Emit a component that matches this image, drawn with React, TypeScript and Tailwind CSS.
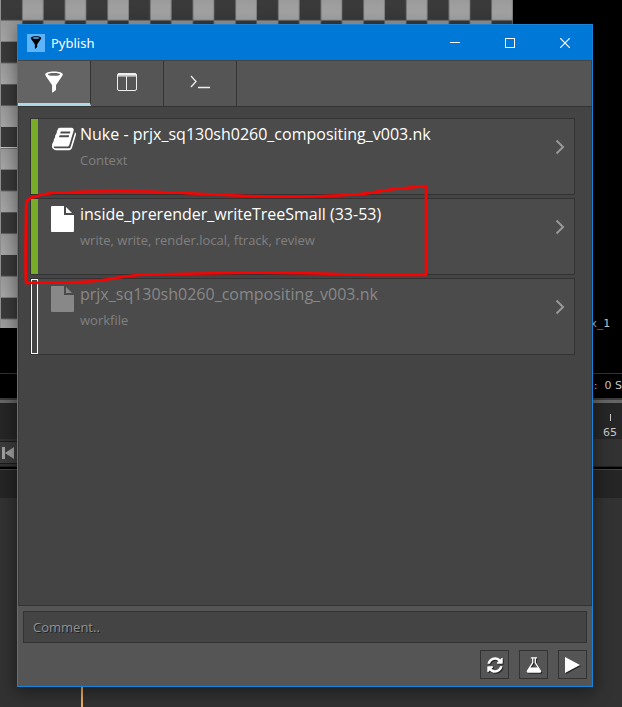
import React from "react";

const BOOK =
  "M1703 478q40 57 18 129l-275 906q-19 64-76.5 107.5t-122.5 43.5h-923q-77 0-148.5-53.5t-99.5-131.5q-24-67-2-127 0-4 3-27t4-37q1-8-3-21.5t-3-19.5q2-11 8-21t16.5-23.5 16.5-23.5q23-38 45-91.5t30-91.5q3-10 .5-30t-.5-28q3-11 17-28t17-23q21-36 42-92t25-90q1-9-2.500-32t.5-28q4-13 22-30.5t22-22.500q19-26 42.500-84.500t27.500-96.500q1-8-3-25.500t-2-26.500q2-8 9-18t18-23 17-21q8-12 16.500-30.500t15-35 16-36 19.500-32 26.500-23.500 36-11.500 47.500 5.500l-1 3q38-9 51-9h761q74 0 114 56t18 130l-274 906q-36 119-71.500 153.500t-128.500 34.500h-869q-27 0-38 15-11 16-1 43 24 70 144 70h923q29 0 56-15.500t35-41.500l300-987q7-22 5-57 38 15 59 43zm-1064 2q-4 13 2 22.500t20 9.500h608q13 0 25.500-9.500t16.500-22.500l21-64q4-13-2-22.500t-20-9.500h-608q-13 0-25.500 9.500t-16.500 22.500zm-83 256q-4 13 2 22.500t20 9.500h608q13 0 25.500-9.500t16.500-22.500l21-64q4-13-2-22.500t-20-9.500h-608q-13 0-25.500 9.500t-16.500 22.500z";
const REFRESH =
  "M1639 1056q0 5-1 7-64 268-268 434.5t-478 166.5q-146 0-282.5-55t-243.5-157l-129 129q-19 19-45 19t-45-19-19-45v-448q0-26 19-45t45-19h448q26 0 45 19t19 45-19 45l-137 137q71 66 161 102t187 36q134 0 250-65t186-179q11-17 53-117 8-23 30-23h192q13 0 22.5 9.5t9.5 22.5zm25-800v448q0 26-19 45t-45 19h-448q-26 0-45-19t-19-45 19-45l138-138q-148-137-349-137-134 0-250 65t-186 179q-11 17-53 117-8 23-30 23h-199q-13 0-22.5-9.5t-9.5-22.5v-7q65-268 270-434.5t480-166.5q146 0 284 55.5t245 156.5l130-129q19-19 45-19t45 19 19 45z";
const FLASK =
  "M1591 1448q56 89 21.5 152.5t-140.5 63.5h-1152q-106 0-140.5-63.5t21.5-152.5l503-793v-399h-64q-26 0-45-19t-19-45 19-45 45-19h512q26 0 45 19t19 45-19 45-45 19h-64v399zm-779-725l-272 429h712l-272-429-20-31v-436h-128v436z";

function Glyph({ d, className }: { d: string; className: string }) {
  return (
    <svg viewBox="0 0 1792 1792" fill="currentColor" aria-hidden="true" className={className}>
      <path d={d} />
    </svg>
  );
}

function Funnel({ className }: { className: string }) {
  return (
    <svg viewBox="0 0 18 22" aria-hidden="true" className={className}>
      <path
        fill="currentColor"
        fillRule="evenodd"
        d="M9 .5C4 .5.2 1.600.2 3.300c0 .6.3 1.100.6 1.600L6.700 13.600c.3.500.4.800.4 1.400v6.200c0 .3.3.4.6.2l2.700-1.900c.4-.3.6-.6.6-1.100V15c0-.6.1-.9.4-1.400l5.800-8.700c.4-.5.6-1 .6-1.600C17.800 1.600 14 .5 9 .5ZM9 2c3.600 0 6.100.6 6.100 1.400S12.600 4.800 9 4.800 2.900 4.200 2.900 3.400 5.400 2 9 2Z"
      />
    </svg>
  );
}

function FileIcon() {
  return (
    <svg viewBox="0 0 23 26" fill="currentColor" aria-hidden="true" className="h-[26px] w-[23px] shrink-0">
      <path d="M1 0h12v9h10v16a1 1 0 0 1-1 1H1a1 1 0 0 1-1-1V1a1 1 0 0 1 1-1Z" />
      <path d="M15 1 L21 7 H15Z" />
    </svg>
  );
}

type Item = { title: string; tags: string; icon: "book" | "file"; enabled: boolean };

const items: Item[] = [
  { title: "Nuke - prjx_sq130sh0260_compositing_v003.nk", tags: "Context", icon: "book", enabled: true },
  {
    title: "inside_prerender_writeTreeSmall (33-53)",
    tags: "write, write, render.local, ftrack, review",
    icon: "file",
    enabled: true,
  },
  { title: "prjx_sq130sh0260_compositing_v003.nk", tags: "workfile", icon: "file", enabled: false },
];

function Row({ item }: { item: Item }) {
  return (
    <li className="flex h-[77px] border border-[#333333] bg-[#4b4b4b]">
      <span
        className={
          item.enabled ? "w-[7px] shrink-0 bg-[#78ab27]" : "w-[7px] shrink-0 border border-white bg-[#444444]"
        }
      />
      <span
        className={
          item.enabled
            ? "flex w-[42px] shrink-0 justify-start pt-[7px] pl-[13px] text-white"
            : "flex w-[42px] shrink-0 justify-start pt-[7px] pl-[13px] text-[#888888]"
        }
      >
        {item.icon === "book" ? <Glyph d={BOOK} className="h-[26px] w-[26px] shrink-0" /> : <FileIcon />}
      </span>
      <div className="min-w-0 flex-1 pt-1">
        <h2
          className={
            item.enabled
              ? "truncate text-[16px] leading-[22px] text-white"
              : "truncate text-[16px] leading-[22px] text-[#888888]"
          }
        >
          {item.title}
        </h2>
        <p className="mt-1 truncate text-[13px] leading-[22px] text-[#808080]">{item.tags}</p>
      </div>
      <button type="button" aria-label="Show details" className="h-14 w-[27px] shrink-0 text-[#999999]">
        <svg viewBox="0 0 10 16" fill="none" stroke="currentColor" strokeWidth="2" className="ml-2 h-4 w-[10px]">
          <path d="M1.500 1.500 8 8l-6.500 6.500" />
        </svg>
      </button>
    </li>
  );
}

function Backdrop() {
  return (
    <div aria-hidden="true" className="absolute inset-0 flex flex-col overflow-hidden bg-[#323232] text-[#c8c8c8]">
      <div className="relative h-[373px] shrink-0 bg-black">
        <svg className="block h-[328px] w-[513px]">
          <defs>
            <linearGradient id="tile" x1="0" y1="0" x2="0" y2="1">
              <stop offset="0" stopColor="#9a9a9a" />
              <stop offset="1" stopColor="#a8a8a8" />
            </linearGradient>
            <pattern id="checker" x="1" y="-1" width="42.660" height="42.660" patternUnits="userSpaceOnUse">
              <rect width="43" height="43" fill="#3a3a3a" />
              <rect x="21.330" width="21.330" height="21.330" fill="url(#tile)" />
              <rect y="21.330" width="21.330" height="21.330" fill="url(#tile)" />
              <rect x="42" width="1" height="43" fill="#777777" />
            </pattern>
          </defs>
          <rect width="513" height="328" fill="url(#checker)" />
          <rect width="1" height="328" fill="#909090" />
          <rect y="147" width="513" height="1" fill="#c4c4c4" />
        </svg>
        <span className="absolute right-3 bottom-[41px] font-['DejaVu_Sans_Mono',monospace] text-[11px] leading-4">
          x_1
        </span>
      </div>
      <div className="flex h-[25px] shrink-0 items-end justify-end border-t border-[#333333] bg-black pb-1 font-['DejaVu_Sans',sans-serif] text-[11px] leading-4 whitespace-pre">
        {":  0 S"}
      </div>
      <div className="h-[2px] shrink-0 bg-[#3c3c3c]" />
      <div className="h-[3px] shrink-0 bg-[#666666]" />
      <div className="flex h-9 shrink-0 items-end justify-end bg-[#262626] pr-[5px]">
        <span className="flex flex-col items-center font-['DejaVu_Sans',sans-serif] text-[11px] leading-3">
          <span className="mb-[6px] h-[7px] w-px bg-[#c8c8c8]" />
          65
        </span>
      </div>
      <div className="flex h-7 shrink-0 items-center border-b border-[#222222] bg-[#323232]">
        <span className="flex h-[23px] w-[18px] items-center border-y border-[#1c1c1c] bg-[#3c3c3c] pl-[2px]">
          <svg viewBox="0 0 12 12" className="h-3 w-3" fill="#a0a0a0">
            <path d="M0 0h3v12H0zM12 0v12L3 6z" />
          </svg>
        </span>
      </div>
      <div className="h-[2px] shrink-0 bg-black" />
      <div className="h-[29px] shrink-0 border-t border-[#444444] bg-[#252525]" />
      <div className="relative flex-1">
        <span className="absolute inset-y-0 left-[81px] w-[2px] bg-[#f0b060]" />
      </div>
    </div>
  );
}

const tabBase = "flex w-[73px] items-center justify-center border-r border-[#333333] pb-[3px] text-[#eeeeee]";
const toolButton =
  "flex h-[29px] w-[29px] items-center justify-center border border-[#333333] bg-[#555555] text-white";
const iconShadow = "drop-shadow-[1px_1px_0px_#222222]";

export default function App() {
  return (
    <div className="relative flex min-h-screen flex-col overflow-hidden bg-[#323232] pt-6 pr-[29px] pb-5 pl-[17px] font-['Open_Sans','Noto_Sans',sans-serif]">
      <Backdrop />
      <main className="relative flex flex-1 flex-col border border-[#1883d7] bg-[#555555] shadow-[0_4px_16px_2px_rgba(0,0,0,0.4)]">
        <header className="flex h-[35px] shrink-0 items-center bg-[#0078d7] pl-[9px] text-white">
          <span className="flex h-[18px] w-[18px] items-center justify-center bg-[#5cb4fa] text-black">
            <Funnel className="h-[13px] w-[12px]" />
          </span>
          <h1 className="ml-[6px] flex-1 font-['Noto_Sans',sans-serif] text-[13px] leading-4">Pyblish</h1>
          <button type="button" aria-label="Minimize" className="flex h-full w-[55px] items-center justify-center">
            <span className="h-px w-[10px] bg-white" />
          </button>
          <button type="button" aria-label="Maximize" className="flex h-full w-[55px] items-center justify-center">
            <span className="h-[10px] w-[10px] border border-white" />
          </button>
          <button type="button" aria-label="Close" className="flex h-full w-[55px] items-center justify-center">
            <svg viewBox="0 0 10 10" className="h-[10px] w-[10px]" stroke="white" strokeWidth="1.200">
              <path d="M0 0l10 10M10 0L0 10" />
            </svg>
          </button>
        </header>

        <nav className="flex h-[46px] shrink-0 border-t border-r border-[#444444]">
          <button
            type="button"
            aria-label="Artist view"
            className="flex w-[73px] items-center justify-center border-r border-b-[3px] border-r-[#333333] border-b-[#add8e6] bg-[#646464] text-white"
          >
            <Funnel className="h-[22px] w-[18px]" />
          </button>
          <button type="button" aria-label="Overview" className={tabBase}>
            <svg viewBox="0 0 20 18" fill="none" stroke="currentColor" className="h-[18px] w-5">
              <rect x=".5" y=".5" width="19" height="17" rx="1.500" />
              <path strokeWidth="2" d="M1 1.500h18" />
              <path d="M1 3h18M9.500 3v14" />
            </svg>
          </button>
          <button type="button" aria-label="Terminal" className={tabBase}>
            <svg viewBox="0 0 20 14" fill="none" stroke="currentColor" className="h-[14px] w-5">
              <path strokeWidth="1.300" d="M1 1l5 5.500L1 12M8 12.500h12" />
            </svg>
          </button>
        </nav>

        <section className="flex flex-1 flex-col border border-[#333333] border-x-[#3a3a3a] bg-[#444444] pt-[11px] pr-4 pl-[11px]">
          <ul className="flex flex-col gap-[3px]">
            {items.map((item) => (
              <Row key={item.title} item={item} />
            ))}
          </ul>
        </section>

        <footer className="flex shrink-0 flex-col gap-[7px] px-[5px] pt-[5px] pb-[7px]">
          <input
            type="text"
            aria-label="Comment"
            placeholder="Comment.."
            className="h-8 w-full border border-[#333333] bg-[#444444] px-[9px] text-[13px] text-white outline-none [text-shadow:1px_1px_0_#222222] placeholder:text-[#909090]"
          />
          <div className="flex justify-end gap-[10px]">
            <button type="button" aria-label="Refresh" className={toolButton}>
              <Glyph d={REFRESH} className={`h-[18px] w-[18px] ${iconShadow}`} />
            </button>
            <button type="button" aria-label="Validate" className={toolButton}>
              <Glyph d={FLASK} className={`h-[18px] w-[18px] ${iconShadow}`} />
            </button>
            <button type="button" aria-label="Publish" className={toolButton}>
              <svg viewBox="0 0 15 16" fill="currentColor" className={`h-4 w-[15px] ${iconShadow}`}>
                <path d="M0 0l15 8-15 8z" />
              </svg>
            </button>
          </div>
        </footer>
      </main>

      <svg
        aria-hidden="true"
        viewBox="0 0 410 106"
        fill="none"
        stroke="#ff0000"
        strokeWidth="2.600"
        strokeLinejoin="round"
        className="pointer-events-none absolute top-[182px] left-5 h-[106px] w-[410px]"
      >
        <path d="M6 101C5 80 6 50 6 26C6 18 8 16 14 15C22 12 30 11 40 10.500C70 9 100 9 130 9.500C170 11 200 13 230 14C260 15 300 15 340 12C352 11 360 9 370 7.500L406 4V93L355 93C310 92 260 90 210 91C170 91.500 140 92 118 93C95 95 90 98 75 99C55 101 30 100 6 101Z" />
      </svg>
    </div>
  );
}
